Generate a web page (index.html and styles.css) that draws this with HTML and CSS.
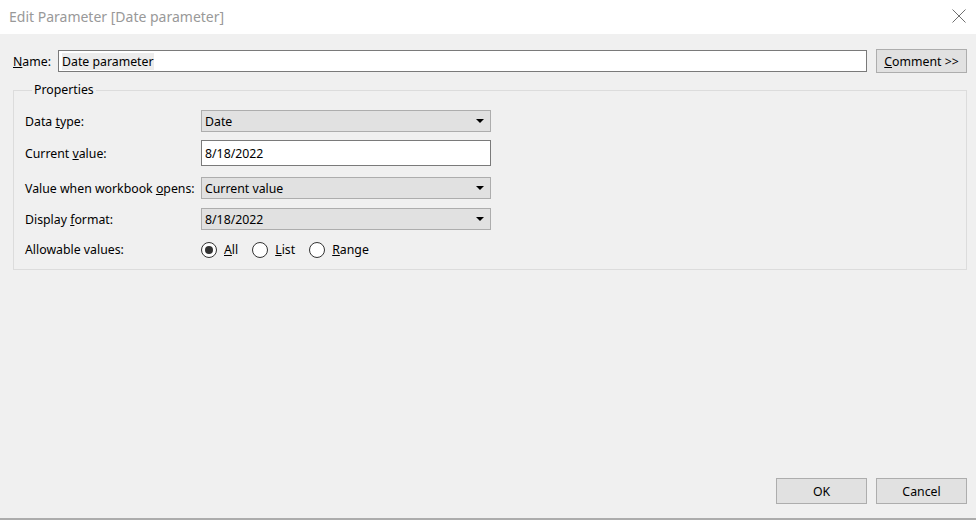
FILE: index.html
```html
<!DOCTYPE html>
<html lang="en">
<head>
    <meta charset="UTF-8">
    <title>Edit Parameter [Date parameter]</title>
    <link rel="stylesheet" href="styles.css">
</head>
<body>
    <div class="dialog">
        <div class="titlebar">
            <span class="title">Edit Parameter [Date parameter]</span>
            <svg class="close" viewBox="0 0 14 14" aria-hidden="true">
                <path d="M0.5 0.5 L13.5 13.5 M13.5 0.5 L0.5 13.5" stroke="#6f6f6f" stroke-width="1" fill="none"/>
            </svg>
        </div>

        <div class="content">
            <div class="name-row">
                <label class="name-label"><u>N</u>ame:</label>
                <div class="text-field name-field"><span class="selected">Date parameter</span></div>
                <button class="btn comment-btn"><u>C</u>omment &gt;&gt;</button>
            </div>

            <fieldset class="properties">
                <legend>Properties</legend>

                <div class="prop-row">
                    <label>Data <u>t</u>ype:</label>
                    <div class="combo">Date<span class="arrow"></span></div>
                </div>

                <div class="prop-row tight-gap">
                    <label>Current <u>v</u>alue:</label>
                    <div class="text-field value-field">8/18/2022</div>
                </div>

                <div class="prop-row wide-gap">
                    <label>Value when workbook <u>o</u>pens:</label>
                    <div class="combo">Current value<span class="arrow"></span></div>
                </div>

                <div class="prop-row">
                    <label>Display <u>f</u>ormat:</label>
                    <div class="combo">8/18/2022<span class="arrow"></span></div>
                </div>

                <div class="prop-row wide-gap">
                    <label>Allowable values:</label>
                    <div class="radios">
                        <span class="radio checked"></span><span class="radio-text"><u>A</u>ll</span>
                        <span class="radio"></span><span class="radio-text"><u>L</u>ist</span>
                        <span class="radio"></span><span class="radio-text"><u>R</u>ange</span>
                    </div>
                </div>
            </fieldset>

            <div class="footer">
                <button class="btn footer-btn">OK</button>
                <button class="btn footer-btn">Cancel</button>
            </div>
        </div>
    </div>
</body>
</html>
```

FILE: styles.css
```css
html, body {
    margin: 0;
    padding: 0;
}

body {
    font-family: 'Noto Sans', 'Open Sans', sans-serif;
    font-size: 12.3px;
    color: #000;
    background-color: #ffffff;
}

.dialog {
    width: 976px;
    height: 520px;
    display: flex;
    flex-direction: column;
    box-sizing: border-box;
}

.titlebar {
    height: 34px;
    flex-shrink: 0;
    background-color: #ffffff;
    display: flex;
    align-items: center;
    justify-content: space-between;
    padding: 0 10px 0 9px;
}

.title {
    font-size: 14px;
    color: #999999;
    margin-top: -2px;
}

.close {
    width: 14px;
    height: 14px;
    margin-top: -3px;
}

.content {
    flex: 1;
    background-color: #f0f0f0;
    border-bottom: 2px solid #acacac;
    display: flex;
    flex-direction: column;
    padding: 15px 9px 14px 13px;
    box-sizing: border-box;
}

.name-row {
    display: flex;
    align-items: center;
    height: 24px;
}

.name-label {
    width: 45px;
}

.text-field {
    background-color: #ffffff;
    border: 1px solid #7a7a7a;
    box-sizing: border-box;
    display: flex;
    align-items: center;
    padding-left: 3px;
}

.name-field {
    flex: 1;
    height: 22px;
    margin-right: 9px;
}

.selected {
    background-color: #ececec;
}

.btn {
    font-family: inherit;
    font-size: 12.3px;
    color: #000;
    background-color: #e1e1e1;
    border: 1px solid #adadad;
    box-sizing: border-box;
    padding: 0;
}

.comment-btn {
    width: 91px;
    height: 24px;
}

fieldset.properties {
    margin: 9px 0 0 0;
    padding: 12px 11px 11px 11px;
    border: 1px solid #dcdcdc;
    min-width: 0;
}

fieldset.properties legend {
    padding: 0 2px;
    margin-left: 7px;
    line-height: 16px;
}

.prop-row {
    display: flex;
    align-items: center;
}

.prop-row + .prop-row {
    margin-top: 9px;
}

.prop-row.tight-gap {
    margin-top: 8px;
}

.prop-row.wide-gap {
    margin-top: 11px;
}

.prop-row label {
    width: 176px;
    flex-shrink: 0;
}

.combo {
    width: 290px;
    height: 22px;
    background-color: #e1e1e1;
    border: 1px solid #adadad;
    box-sizing: border-box;
    display: flex;
    align-items: center;
    justify-content: space-between;
    padding: 0 6px 0 3px;
}

.arrow {
    width: 0;
    height: 0;
    border-left: 4px solid transparent;
    border-right: 4px solid transparent;
    border-top: 4px solid #000;
}

.value-field {
    width: 290px;
    height: 26px;
}

.radios {
    display: flex;
    align-items: center;
    height: 16px;
}

.radio {
    width: 16px;
    height: 16px;
    border: 1px solid #333;
    border-radius: 50%;
    box-sizing: border-box;
    background-color: #fff;
    display: flex;
    align-items: center;
    justify-content: center;
}

.radio.checked::after {
    content: "";
    width: 8px;
    height: 8px;
    border-radius: 50%;
    background-color: #333;
}

.radio-text {
    margin: 0 14px 0 7px;
}

.footer {
    margin-top: auto;
    display: flex;
    justify-content: flex-end;
    gap: 9px;
}

.footer-btn {
    width: 91px;
    height: 26px;
}
```
